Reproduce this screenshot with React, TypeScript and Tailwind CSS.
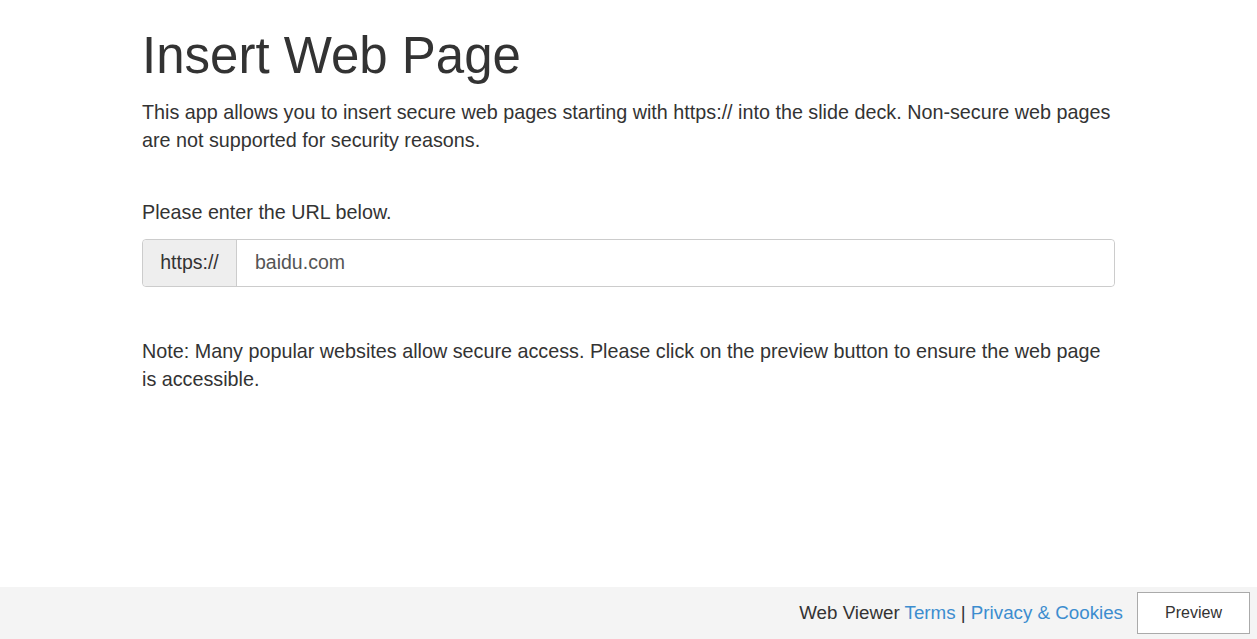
export default function App() {
  return (
    <div
      className="flex h-[639px] flex-col bg-white text-[#333]"
      style={{ fontFamily: '"Liberation Sans", Arial, sans-serif' }}
    >
      <main className="flex-1 pl-[142px] pr-[142px]">
        <h1 className="mt-[26px] text-[51px] leading-[60px] font-normal">Insert Web Page</h1>
        <p className="mt-[12px] text-[19.75px] leading-[28px]">
          This app allows you to insert secure web pages starting with https:// into the slide deck. Non-secure web pages
          are not supported for security reasons.
        </p>
        <p className="mt-[44px] text-[19.75px] leading-[28px]">Please enter the URL below.</p>
        <div className="mt-[13px] flex h-[48px] rounded-[4px] border border-[#ccc] text-[19.5px]">
          <span className="flex w-[94px] items-center justify-center rounded-l-[4px] border-r border-[#ccc] bg-[#eee] text-[#333]">
            https://
          </span>
          <input
            defaultValue="baidu.com"
            className="flex-1 rounded-r-[4px] bg-white px-[18px] text-[#555] outline-none"
          />
        </div>
        <p className="mt-[50px] text-[19.75px] leading-[28px]">
          Note: Many popular websites allow secure access. Please click on the preview button to ensure the web page is
          accessible.
        </p>
      </main>
      <footer className="flex h-[52px] items-center justify-end gap-[14px] bg-[#f4f4f4] pr-[7px] text-[18.75px]">
        <div>
          Web Viewer <a className="text-[#3c8dcf]">Terms</a> | <a className="text-[#3c8dcf]">Privacy &amp; Cookies</a>
        </div>
        <button className="h-[42px] w-[113px] border border-[#aaa] bg-white text-[16px] text-[#333]">Preview</button>
      </footer>
    </div>
  );
}
